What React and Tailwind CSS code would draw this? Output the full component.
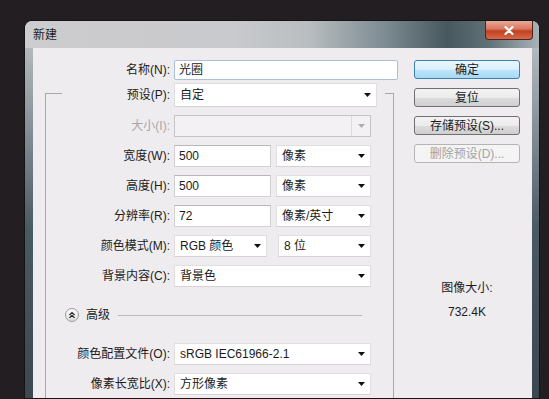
import React from 'react'

const font = { fontFamily: '"Liberation Sans", "Noto Sans CJK SC", sans-serif' }

const Arrow = ({ color = '#111' }) => (
  <svg width="7" height="4" viewBox="0 0 7 4">
    <polygon points="0,0 7,0 3.5,4" fill={color} />
  </svg>
)

const Select = ({ value, w, h = 'h-[22px]' }) => (
  <div className={`${w} ${h} flex items-center justify-between bg-white border border-[#e0dee0] border-b-[#d4d2d4] pl-[5px] pr-[5px] text-[#1b1b1b]`}>
    <span className="whitespace-nowrap">{value}</span>
    <Arrow />
  </div>
)

const Input = ({ value, w }) => (
  <div className={`${w} h-[22px] flex items-center bg-white border border-[#d2d0d2] border-t-[#b9b7b9] pl-[4px] text-[#1b1b1b]`}>
    {value}
  </div>
)

const Row = ({ label, children, disabled }) => (
  <div className="h-[30px] flex items-center">
    <div className={`w-[124px] text-right whitespace-nowrap ${disabled ? 'text-[#a8a6a8]' : 'text-[#1b1b1b]'}`}>{label}</div>
    <div className="ml-[4px] flex items-center">{children}</div>
  </div>
)

const Button = ({ children, primary, disabled }) => {
  let cls = 'border-[#707070] bg-[linear-gradient(to_bottom,#f3f3f3_0%,#ebebeb_50%,#dddddd_51%,#cfcfcf_100%)] text-[#1b1b1b]'
  if (primary) cls = 'border-[#3c7fb1] bg-[linear-gradient(to_bottom,#eaf6fd_0%,#d9f0fc_50%,#bee6fd_51%,#a7d9f5_100%)] text-[#1b1b1b]'
  if (disabled) cls = 'border-[#b5b5b5] bg-[#f4f4f4] text-[#a3a3a3]'
  return (
    <div className={`w-[106px] h-[19px] flex items-center justify-center rounded-[3px] border ${cls}`}>
      {children}
    </div>
  )
}

export default function App() {
  return (
    <div className="w-[549px] h-[399px] overflow-hidden bg-[#221e21] pt-[20px] pl-[24px] text-[12px] leading-[16px]" style={font}>
      <div className="w-[516px] h-[379px] flex flex-col rounded-t-[8px] border border-[#141414] bg-[linear-gradient(to_bottom,#c3c6c9_0%,#8c979d_25%,#4a5a62_55%,#3a4850_100%)]">
        {/* title bar */}
        <div className="h-[27px] flex justify-between rounded-t-[7px] bg-[linear-gradient(to_right,#cdcccf_0%,#c9cacd_40%,#b9bec1_55%,#7d8b92_70%,#48585f_82%,#5f6f76_90%,#a9b3b7_100%)]">
          <div className="pl-[8px] pt-[6px] text-[12px] text-[#1e1e1e]">新建</div>
          <div className="mr-[6px] w-[48px] h-[19px] flex items-center justify-center rounded-b-[4px] border border-t-0 border-[#4b2620] bg-[linear-gradient(to_bottom,#e9aa98_0%,#d8755e_45%,#c2401f_55%,#d46a4b_100%)]">
            <svg width="10" height="9" viewBox="0 0 10 9">
              <path d="M1.5 1 L8.5 8 M8.5 1 L1.5 8" stroke="#ffffff" strokeWidth="2.2" strokeLinecap="round" />
            </svg>
          </div>
        </div>

        {/* content */}
        <div className="flex-1 ml-[8px] mr-[7px] flex bg-[#efecf0] overflow-hidden">
          <div className="w-[367px] pt-[12px]">
            <div className="h-[20px] flex items-center">
              <div className="w-[137px] text-right text-[#1b1b1b]">名称(N):</div>
              <div className="ml-[4px] w-[224px] h-[20px] flex items-center bg-white border border-[#a9c0d8] rounded-[2px] pl-[4px] text-[#1b1b1b]">光圈</div>
            </div>

            <div className="mt-[13px] ml-[12px] w-[349px] h-[320px] border-t border-l border-r border-[#a9a7a9]">
              <div className="-mt-[11px] ml-[16px] w-[323px] h-[24px] flex items-center bg-[#efecf0]">
                <div className="w-[108px] text-right text-[#1b1b1b]">预设(P):</div>
                <div className="ml-[4px]">
                  <Select value="自定" w="w-[203px]" h="h-[24px]" />
                </div>
              </div>

              <div className="mt-[4px]">
                <Row label="大小(I):" disabled>
                  <div className="w-[197px] h-[22px] flex items-center bg-[#f3f1f3] border border-[#c6c4c6]">
                    <div className="flex-1" />
                    <div className="w-[19px] h-full flex items-center justify-center border-l border-[#dcdadc]">
                      <Arrow color="#b0aeb0" />
                    </div>
                  </div>
                </Row>
                <Row label="宽度(W):">
                  <Input value="500" w="w-[97px]" />
                  <div className="ml-[5px]"><Select value="像素" w="w-[95px]" /></div>
                </Row>
                <Row label="高度(H):">
                  <Input value="500" w="w-[97px]" />
                  <div className="ml-[5px]"><Select value="像素" w="w-[95px]" /></div>
                </Row>
                <Row label="分辨率(R):">
                  <Input value="72" w="w-[97px]" />
                  <div className="ml-[5px]"><Select value="像素/英寸" w="w-[95px]" /></div>
                </Row>
                <Row label="颜色模式(M):">
                  <Select value="RGB 颜色" w="w-[93px]" />
                  <div className="ml-[11px]"><Select value="8 位" w="w-[93px]" /></div>
                </Row>
                <Row label="背景内容(C):">
                  <Select value="背景色" w="w-[197px]" />
                </Row>

                <div className="h-[48px] flex items-center">
                  <div className="ml-[19px] w-[14px] h-[14px] rounded-full border border-[#9c9a9c] bg-[linear-gradient(to_bottom,#ffffff,#dcdadc)] flex items-center justify-center">
                    <svg width="8" height="8" viewBox="0 0 8 8">
                      <path d="M1.5 4 L4 1.5 L6.5 4 M1.5 6.8 L4 4.3 L6.5 6.8" stroke="#222" strokeWidth="1.2" fill="none" />
                    </svg>
                  </div>
                  <div className="ml-[7px] text-[#1b1b1b]">高级</div>
                  <div className="flex-1 ml-[8px] mr-[31px] h-px bg-[#bcbabc]" />
                </div>

                <Row label="颜色配置文件(O):">
                  <Select value="sRGB IEC61966-2.1" w="w-[197px]" />
                </Row>
                <Row label="像素长宽比(X):">
                  <Select value="方形像素" w="w-[197px]" />
                </Row>
              </div>
            </div>
          </div>

          <div className="pl-[14px] pt-[12px] flex flex-col">
            <div className="flex flex-col gap-[9px]">
              <Button primary>确定</Button>
              <Button>复位</Button>
              <Button>存储预设(S)...</Button>
              <Button disabled>删除预设(D)...</Button>
            </div>
            <div className="mt-[117px] w-[106px] text-center text-[#1b1b1b]">图像大小:</div>
            <div className="mt-[8px] w-[106px] text-center text-[#1b1b1b]">732.4K</div>
          </div>
        </div>
      </div>
    </div>
  )
}
